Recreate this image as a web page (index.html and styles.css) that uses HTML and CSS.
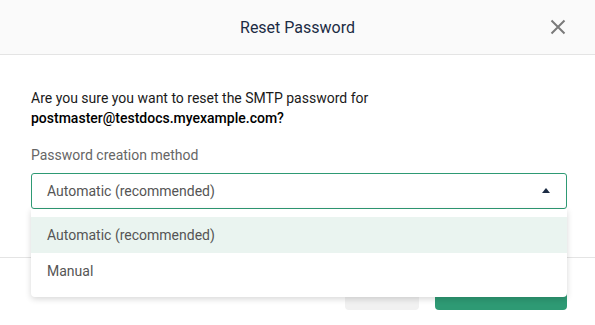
FILE: index.html
```html
<!DOCTYPE html>
<html lang="en">
<head>
    <meta charset="UTF-8">
    <meta name="viewport" content="width=device-width, initial-scale=1.0">
    <title>Reset Password</title>
    <link rel="stylesheet" href="styles.css">
</head>
<body>
    <div class="modal">
        <div class="modal-header">
            <div class="modal-title">Reset Password</div>
            <button class="close-btn" aria-label="Close">
                <svg width="16" height="16" viewBox="0 0 16 16">
                    <path d="M1.5 1.5 L14.5 14.5 M14.5 1.5 L1.5 14.5" stroke="#7a7a7a" stroke-width="2" fill="none"/>
                </svg>
            </button>
        </div>

        <div class="modal-body">
            <p class="confirm-text">
                Are you sure you want to reset the SMTP password for<br/>
                <strong>postmaster@testdocs.myexample.com?</strong>
            </p>

            <div class="field-label">Password creation method</div>

            <div class="select-wrap">
                <div class="select-box">
                    <span class="select-value">Automatic (recommended)</span>
                    <span class="caret"></span>
                </div>
                <!-- open dropdown menu -->
                <ul class="select-menu">
                    <li class="select-option active">Automatic (recommended)</li>
                    <li class="select-option">Manual</li>
                </ul>
            </div>
        </div>

        <div class="modal-footer">
            <button class="btn btn-cancel">Cancel</button>
            <button class="btn btn-primary">Reset Password</button>
        </div>
    </div>
</body>
</html>
```

FILE: styles.css
```css
body {
    margin: 0;
    font-family: Roboto, 'Liberation Sans', Arial, sans-serif;
    background: #ffffff;
    color: #1a1a1a;
}
.modal {
    width: 595px;
    background: white;
}
.modal-header {
    height: 54px;
    border-bottom: 1px solid #e4e4e4;
    background: #fafafa;
    display: grid;
    grid-template-columns: 1fr auto 1fr;
    align-items: center;
}
.modal-title {
    grid-column: 2;
    font-size: 16px;
    color: #1c2c44;
}
.close-btn {
    grid-column: 3;
    justify-self: end;
    margin-right: 29px;
    padding: 0;
    border: none;
    background: none;
    width: 16px;
    height: 16px;
    display: flex;
}
.modal-body {
    padding: 33px 28px 48px 31px;
}
.confirm-text {
    margin: 0 0 17px;
    font-size: 14px;
    line-height: 20px;
    color: #1a1a1a;
}
.confirm-text strong {
    font-weight: 500;
    color: #000;
}
.field-label {
    font-size: 14px;
    line-height: 20px;
    color: #666;
    margin-bottom: 8px;
}
.select-wrap {
    position: relative;
}
.select-box {
    height: 34px;
    border: 1px solid #2e9a74;
    border-radius: 3px;
    display: flex;
    align-items: center;
    justify-content: space-between;
    padding: 0 15px;
}
.select-value {
    font-size: 14px;
    color: #555;
}
.caret {
    width: 0;
    height: 0;
    border-left: 4px solid transparent;
    border-right: 4px solid transparent;
    border-bottom: 5px solid #1c2c44;
    margin-right: 1px;
    margin-bottom: 1px;
}
.select-menu {
    position: absolute;
    left: 0;
    right: 0;
    top: 36px;
    margin: 0;
    padding: 8px 0;
    list-style: none;
    background: white;
    border-radius: 0 0 4px 4px;
    box-shadow: 0 2px 6px rgba(0,0,0,0.16);
    z-index: 2;
}
.select-option {
    height: 36px;
    line-height: 36px;
    padding: 0 16px;
    font-size: 14px;
    color: #555;
}
.select-option.active {
    background: #eaf4f0;
}
.modal-footer {
    border-top: 1px solid #e4e4e4;
    padding: 16px 28px 16px 0;
    display: flex;
    justify-content: flex-end;
    gap: 16px;
}
.btn {
    height: 36px;
    border: none;
    border-radius: 4px;
    font-family: inherit;
    font-size: 14px;
}
.btn-cancel {
    width: 74px;
    background: #f1f1f1;
    color: #555;
}
.btn-primary {
    width: 132px;
    background: #2e9a74;
    color: white;
}
```
